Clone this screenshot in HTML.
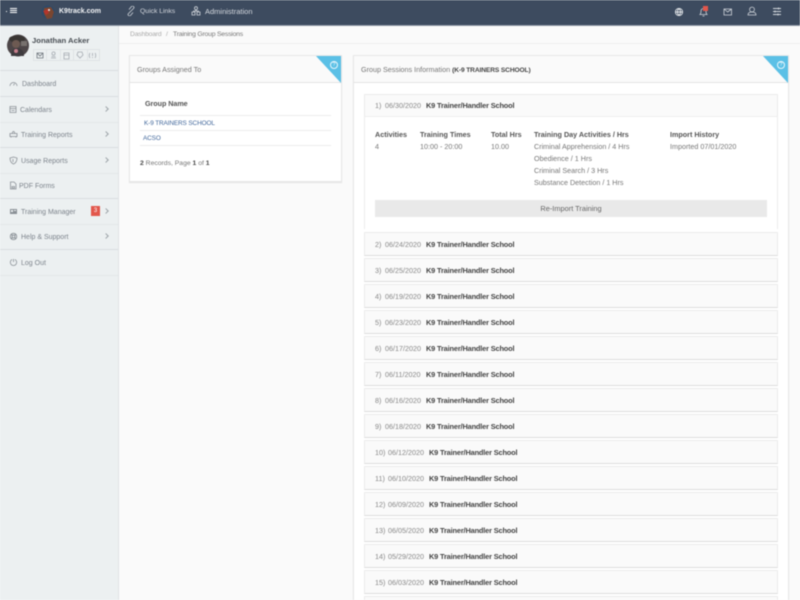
<!DOCTYPE html>
<html><head><meta charset="utf-8"><style>
html,body{margin:0;padding:0;width:800px;height:600px;overflow:hidden;background:#fafafa;font-family:"Liberation Sans",sans-serif;font-size:8px;color:#666}
#wrap{position:relative;width:800px;height:600px;overflow:hidden;background:#fafafa;filter:blur(.4px)}
.a{position:absolute;white-space:nowrap}
.top{position:absolute;left:0;top:0;width:800px;height:25px;background:#3d4b5f;border-bottom:1px solid #8f98a5}
.top .a{color:#d5d9df;line-height:10px;top:7px}
.side{position:absolute;left:0;top:26px;width:118px;height:574px;background:#ecf0f1;border-right:1px solid #dfe3e5}
.li{position:absolute;left:0;width:118px;height:25px;border-bottom:1px solid #e3e7e9}
.li.s{border-bottom-color:#dadee0}
.li b{position:absolute;font-weight:normal;font-size:7px;color:#7d848c;line-height:10px;top:9px;white-space:nowrap}
.li i{position:absolute;left:104px;top:10px;width:3px;height:3px;border-top:1px solid #a0a6ab;border-right:1px solid #a0a6ab;transform:rotate(45deg)}
.li svg{position:absolute;left:9px;top:8px}
.panel{position:absolute;background:#fff;border:1px solid #e8e8e8;box-shadow:0 1px 1px #e2e2e2;box-sizing:border-box}
.ph{position:absolute;left:0;top:0;right:0;height:27px;background:#fafafa;border-bottom:1px solid #e4e4e4;line-height:27px;color:#777;font-size:7.2px;box-sizing:border-box;padding-left:7px;white-space:nowrap}
.ph b{color:#444;font-size:6.600px;letter-spacing:-.1px}
.tri{position:absolute;right:0;top:0;width:0;height:0;border-top:27px solid #5bc0e6;border-left:25px solid transparent}
.q{position:absolute;right:3px;top:5px;width:6px;height:6px;border:1px solid #e8f6fc;border-radius:50%;color:#fff;font-size:5px;line-height:6px;text-align:center}
.row{position:absolute;left:364px;width:414px;height:24px;background:#fafafa;border:1px solid #ececec;border-bottom:1px solid #ddd;box-sizing:border-box;line-height:23px;font-size:7.2px;color:#888;white-space:nowrap;padding-left:10px}
.row u{text-decoration:none;display:inline-block;width:10px}
.row u.w{width:13px}
.row s{text-decoration:none;display:inline-block;width:41px}
.row b{color:#444;font-size:7.4px;letter-spacing:-.16px}
.h{color:#555;font-weight:bold;font-size:7.2px;line-height:10px}
.t{color:#777;font-size:7.2px;line-height:12px}
.tline{position:absolute;left:140px;width:191px;height:1px;background:#ececec}
.link{color:#41679b;font-size:6.400px;letter-spacing:-.1px;line-height:10px}
</style></head><body><div id="wrap">

<div class="side">
  <svg class="a" style="left:7px;top:8px" width="22" height="23" viewBox="0 0 22 23"><circle cx="11" cy="11.500" r="11" fill="#4d4648"/><ellipse cx="10" cy="5" rx="8" ry="3.500" fill="#3a3634"/><rect x="14" y="7" width="6" height="5" fill="#77716e"/><ellipse cx="9" cy="10" rx="4" ry="4" fill="#6d5a52"/><path d="M4 22c0-6 3-8 6-8s7 2 7 8z" fill="#3f3b3f"/><circle cx="9" cy="17" r="2" fill="#c77f8c"/></svg>
  <div class="a" style="left:32px;top:10px;font-size:7.7px;color:#4a4f55;font-weight:bold;line-height:10px">Jonathan Acker</div>
  <div class="a" style="left:33px;top:23px;width:67px;height:12px;border:1px solid #dfe3e5;box-sizing:border-box"></div>
  <div class="a" style="left:46px;top:23px;width:1px;height:12px;background:#dfe3e5"></div>
  <div class="a" style="left:60px;top:23px;width:1px;height:12px;background:#dfe3e5"></div>
  <div class="a" style="left:73px;top:23px;width:1px;height:12px;background:#dfe3e5"></div>
  <div class="a" style="left:87px;top:23px;width:1px;height:12px;background:#dfe3e5"></div>
  <svg class="a" style="left:36px;top:25px" width="62" height="9" viewBox="0 0 62 9" fill="none" stroke="#6e757c" stroke-width=".8"><path d="M1 2h6v5H1zM1 2l3 3 3-3"/><g stroke="#a5abb1"><circle cx="17.500" cy="2.500" r="1.600"/><path d="M15 7h5M15.500 5.500h4"/><path d="M28 2h5v6h-5zM28 4h5"/><path d="M42 1h4l1 3-3 3-3-3z"/><path d="M54 2c-1 1-1 4 0 5M59 2c1 1 1 4 0 5M56.500 2v3M56.500 6v1"/></g></svg>
  <div class="a" style="left:0;top:44px;width:118px;height:1px;background:#dadee0"></div>
  <div class="li s" style="top:45px"><svg width="9" height="9" viewBox="0 0 9 9" fill="none" stroke="#8a9096" stroke-width=".8"><path d="M1 7a3.500 3.500 0 1 1 7 0M4.500 6.500l1-2"/></svg><b style="left:22px">Dashboard</b></div>
  <div class="li" style="top:71px"><svg width="8" height="9" viewBox="0 0 8 9" fill="none" stroke="#8a9096" stroke-width=".8"><path d="M1 1.500h6v6H1zM1 3.500h6M2.500 5.500h3"/></svg><b style="left:20px">Calendars</b><i></i></div>
  <div class="li s" style="top:96px"><svg width="9" height="9" viewBox="0 0 9 9" fill="none" stroke="#8a9096" stroke-width=".8"><path d="M1 3.500h7v3H1zM3 3.500l1-2h1l1 2M2 6.500v1M7 6.500v1"/></svg><b style="left:21px">Training Reports</b><i></i></div>
  <div class="li" style="top:122px"><svg width="9" height="9" viewBox="0 0 9 9" fill="none" stroke="#8a9096" stroke-width=".8"><path d="M1 2l3.500-1L8 2c0 3-1 5-3.500 6C2 7 1 5 1 2zM4 3v3"/></svg><b style="left:21px">Usage Reports</b><i></i></div>
  <div class="li s" style="top:147px"><svg width="8" height="9" viewBox="0 0 8 9" fill="none" stroke="#8a9096" stroke-width=".8"><path d="M1.500 1H5l2 2v5H1.500zM3 5.500h2.500v1.500H3z"/></svg><b style="left:19px">PDF Forms</b></div>
  <div class="li" style="top:173px"><svg width="9" height="9" viewBox="0 0 9 9" fill="#8a9096"><path d="M1 2h7v5H1z"/><path d="M2 3h2v2H2zM5 3h2v1H5z" fill="#ecf0f1"/></svg><b style="left:21px">Training Manager</b><div class="a" style="left:91px;top:7px;width:9px;height:10px;background:#e2574c;color:#fff;font-size:6px;line-height:10px;text-align:center">3</div><i></i></div>
  <div class="li s" style="top:198px"><svg width="9" height="9" viewBox="0 0 9 9" fill="none" stroke="#8a9096" stroke-width=".9"><circle cx="4.500" cy="4.500" r="3.200"/><circle cx="4.500" cy="4.500" r="1.400"/><path d="M2 2l1.500 1.500M7 2L5.500 3.500M2 7l1.500-1.500M7 7L5.500 5.500"/></svg><b style="left:21px">Help &amp; Support</b><i></i></div>
  <div class="li" style="top:224px"><svg width="9" height="9" viewBox="0 0 9 9" fill="none" stroke="#8a9096" stroke-width=".8"><path d="M3 1.500a3.200 3.200 0 1 0 3 0M4.500 1v3"/></svg><b style="left:21px">Log Out</b></div>
</div>

<div class="top">
  <div class="a" style="left:6px;top:11px;width:1px;height:1px;background:#fff"></div>
  <div class="a" style="left:10px;top:8px;width:7px;height:1px;background:#fff;box-shadow:0 2px 0 #fff,0 4px 0 #fff"></div>
  <svg class="a" style="left:41px;top:4px" width="15" height="16" viewBox="0 0 15 16"><circle cx="7" cy="8" r="6.500" fill="#2c4a6a"/><path d="M3 4l7-1 3 5-2 6-5 1-3-5z" fill="#7a4630"/><path d="M2 7l5-2 1 4-3 2z" fill="#b5352b"/><circle cx="8" cy="6" r="1" fill="#eee"/></svg>
  <div class="a" style="left:59px;color:#f2f4f6;font-weight:bold;font-size:7px">K9track.com</div>
  <svg class="a" style="left:127px;top:6px" width="8" height="10" viewBox="0 0 8 10" fill="none" stroke="#cfd4da" stroke-width=".8"><path d="M3 6L1.500 7.500a1.300 1.300 0 0 0 2 2L6 6.500M5 4l1.500-1.500a1.300 1.300 0 0 0-2-2L2 3.500M3 6l2-2"/></svg>
  <div class="a" style="left:140px;font-size:6.800px">Quick Links</div>
  <svg class="a" style="left:191px;top:6px" width="10" height="10" viewBox="0 0 10 10" fill="none" stroke="#cfd4da" stroke-width=".8"><circle cx="5" cy="2.200" r="1.500"/><path d="M1 6h3v3H1zM6 6h3v3H6zM5 4v1.500M2.500 6V5h5v1"/></svg>
  <div class="a" style="left:205px;font-size:7.500px">Administration</div>
  <svg class="a" style="left:674px;top:7px" width="10" height="10" viewBox="0 0 10 10" fill="none" stroke="#e4e7ea" stroke-width=".9"><circle cx="5" cy="5" r="3.600"/><path d="M1.500 5h7M5 1.500c-2 2-2 5 0 7M5 1.500c2 2 2 5 0 7"/></svg>
  <svg class="a" style="left:699px;top:7px" width="9" height="10" viewBox="0 0 9 10" fill="none" stroke="#cfd4da" stroke-width=".8"><path d="M1 7.500c1-1 1-2 1-3.500a2.500 2.500 0 0 1 5 0c0 1.500 0 2.500 1 3.500zM3.500 9h2"/></svg>
  <div class="a" style="left:703px;top:6px;width:5px;height:5px;background:#e2574c"></div>
  <svg class="a" style="left:723px;top:8px" width="10" height="8" viewBox="0 0 10 8" fill="none" stroke="#cfd4da" stroke-width=".8"><path d="M1 1h7.500v6H1zM1 1l3.700 3L8.500 1"/></svg>
  <svg class="a" style="left:747px;top:6px" width="10" height="10" viewBox="0 0 10 10" fill="none" stroke="#cfd4da" stroke-width=".8"><circle cx="5" cy="3.500" r="2.400"/><path d="M1 9c0-2 1.500-3 4-3s4 1 4 3z"/></svg>
  <svg class="a" style="left:772px;top:7px" width="10" height="9" viewBox="0 0 10 9" fill="none" stroke="#cfd4da" stroke-width=".9"><path d="M1 1.500h8M1 4.500h8M1 7.500h8M6.500 .5v2M3 3.500v2M6 6.500v2"/></svg>
</div>

<div class="a" style="left:119px;top:43px;width:681px;height:1px;background:#eeeeee"></div>
<div class="a" style="left:130px;top:30px;color:#aaa;line-height:10px;font-size:6.800px;letter-spacing:-.2px">Dashboard</div>
<div class="a" style="left:166px;top:30px;color:#aaa;line-height:10px;font-size:6.800px">/</div>
<div class="a" style="left:173px;top:30px;color:#777;line-height:10px;font-size:6.800px;letter-spacing:-.2px">Training Group Sessions</div>

<div class="panel" style="left:129px;top:55px;width:213px;height:127px">
  <div class="ph">Groups Assigned To</div>
  <div class="tri"></div><div class="q">?</div>
</div>
<div class="a h" style="left:145px;top:99px;letter-spacing:-.05px">Group Name</div>
<div class="tline" style="top:115px"></div>
<div class="a link" style="left:144px;top:119px">K-9 TRAINERS SCHOOL</div>
<div class="tline" style="top:130px"></div>
<div class="a link" style="left:143px;top:134px">ACSO</div>
<div class="tline" style="top:145px"></div>
<div class="a" style="left:140px;top:159px;line-height:10px;color:#777;font-size:6.800px"><b style="color:#444">2</b> Records, Page <b style="color:#444">1</b> of <b style="color:#444">1</b></div>

<div class="panel" style="left:353px;top:55px;width:436px;height:560px">
  <div class="ph">Group Sessions Information <b>(K-9 TRAINERS SCHOOL)</b></div>
  <div class="tri"></div><div class="q">?</div>
</div>

<div class="a" style="left:364px;top:94px;width:414px;height:135px;border:1px solid #ececec;border-bottom:0;box-sizing:border-box;background:#fff"></div>
<div class="row" style="top:94px;height:23px;border-bottom:1px solid #eee;line-height:22px"><u>1)</u><s>06/30/2020</s><b>K9 Trainer/Handler School</b></div>
<div class="a h" style="left:375px;top:130px">Activities</div>
<div class="a h" style="left:420px;top:130px">Training Times</div>
<div class="a h" style="left:491px;top:130px">Total Hrs</div>
<div class="a h" style="left:534px;top:130px">Training Day Activities / Hrs</div>
<div class="a h" style="left:670px;top:130px">Import History</div>
<div class="a t" style="left:375px;top:141px">4</div>
<div class="a t" style="left:420px;top:141px">10:00 - 20:00</div>
<div class="a t" style="left:491px;top:141px">10.00</div>
<div class="a t" style="left:534px;top:141px">Criminal Apprehension / 4 Hrs</div>
<div class="a t" style="left:534px;top:153px">Obedience / 1 Hrs</div>
<div class="a t" style="left:534px;top:165px">Criminal Search / 3 Hrs</div>
<div class="a t" style="left:534px;top:177px">Substance Detection / 1 Hrs</div>
<div class="a t" style="left:670px;top:141px">Imported 07/01/2020</div>
<div class="a" style="left:375px;top:200px;width:392px;height:17px;background:#e9e9e9;color:#666;text-align:center;line-height:17px;font-size:7.400px">Re-Import Training</div>

<div class="row" style="top:232px"><u>2)</u><s>06/24/2020</s><b>K9 Trainer/Handler School</b></div>
<div class="row" style="top:258px"><u>3)</u><s>06/25/2020</s><b>K9 Trainer/Handler School</b></div>
<div class="row" style="top:284px"><u>4)</u><s>06/19/2020</s><b>K9 Trainer/Handler School</b></div>
<div class="row" style="top:310px"><u>5)</u><s>06/23/2020</s><b>K9 Trainer/Handler School</b></div>
<div class="row" style="top:336px"><u>6)</u><s>06/17/2020</s><b>K9 Trainer/Handler School</b></div>
<div class="row" style="top:362px"><u>7)</u><s>06/11/2020</s><b>K9 Trainer/Handler School</b></div>
<div class="row" style="top:388px"><u>8)</u><s>06/16/2020</s><b>K9 Trainer/Handler School</b></div>
<div class="row" style="top:414px"><u>9)</u><s>06/18/2020</s><b>K9 Trainer/Handler School</b></div>
<div class="row" style="top:440px"><u class="w">10)</u><s>06/12/2020</s><b>K9 Trainer/Handler School</b></div>
<div class="row" style="top:466px"><u class="w">11)</u><s>06/10/2020</s><b>K9 Trainer/Handler School</b></div>
<div class="row" style="top:492px"><u class="w">12)</u><s>06/09/2020</s><b>K9 Trainer/Handler School</b></div>
<div class="row" style="top:518px"><u class="w">13)</u><s>06/05/2020</s><b>K9 Trainer/Handler School</b></div>
<div class="row" style="top:544px"><u class="w">14)</u><s>05/29/2020</s><b>K9 Trainer/Handler School</b></div>
<div class="row" style="top:570px"><u class="w">15)</u><s>06/03/2020</s><b>K9 Trainer/Handler School</b></div>
<div class="row" style="top:596px"></div>
</div></body></html>
